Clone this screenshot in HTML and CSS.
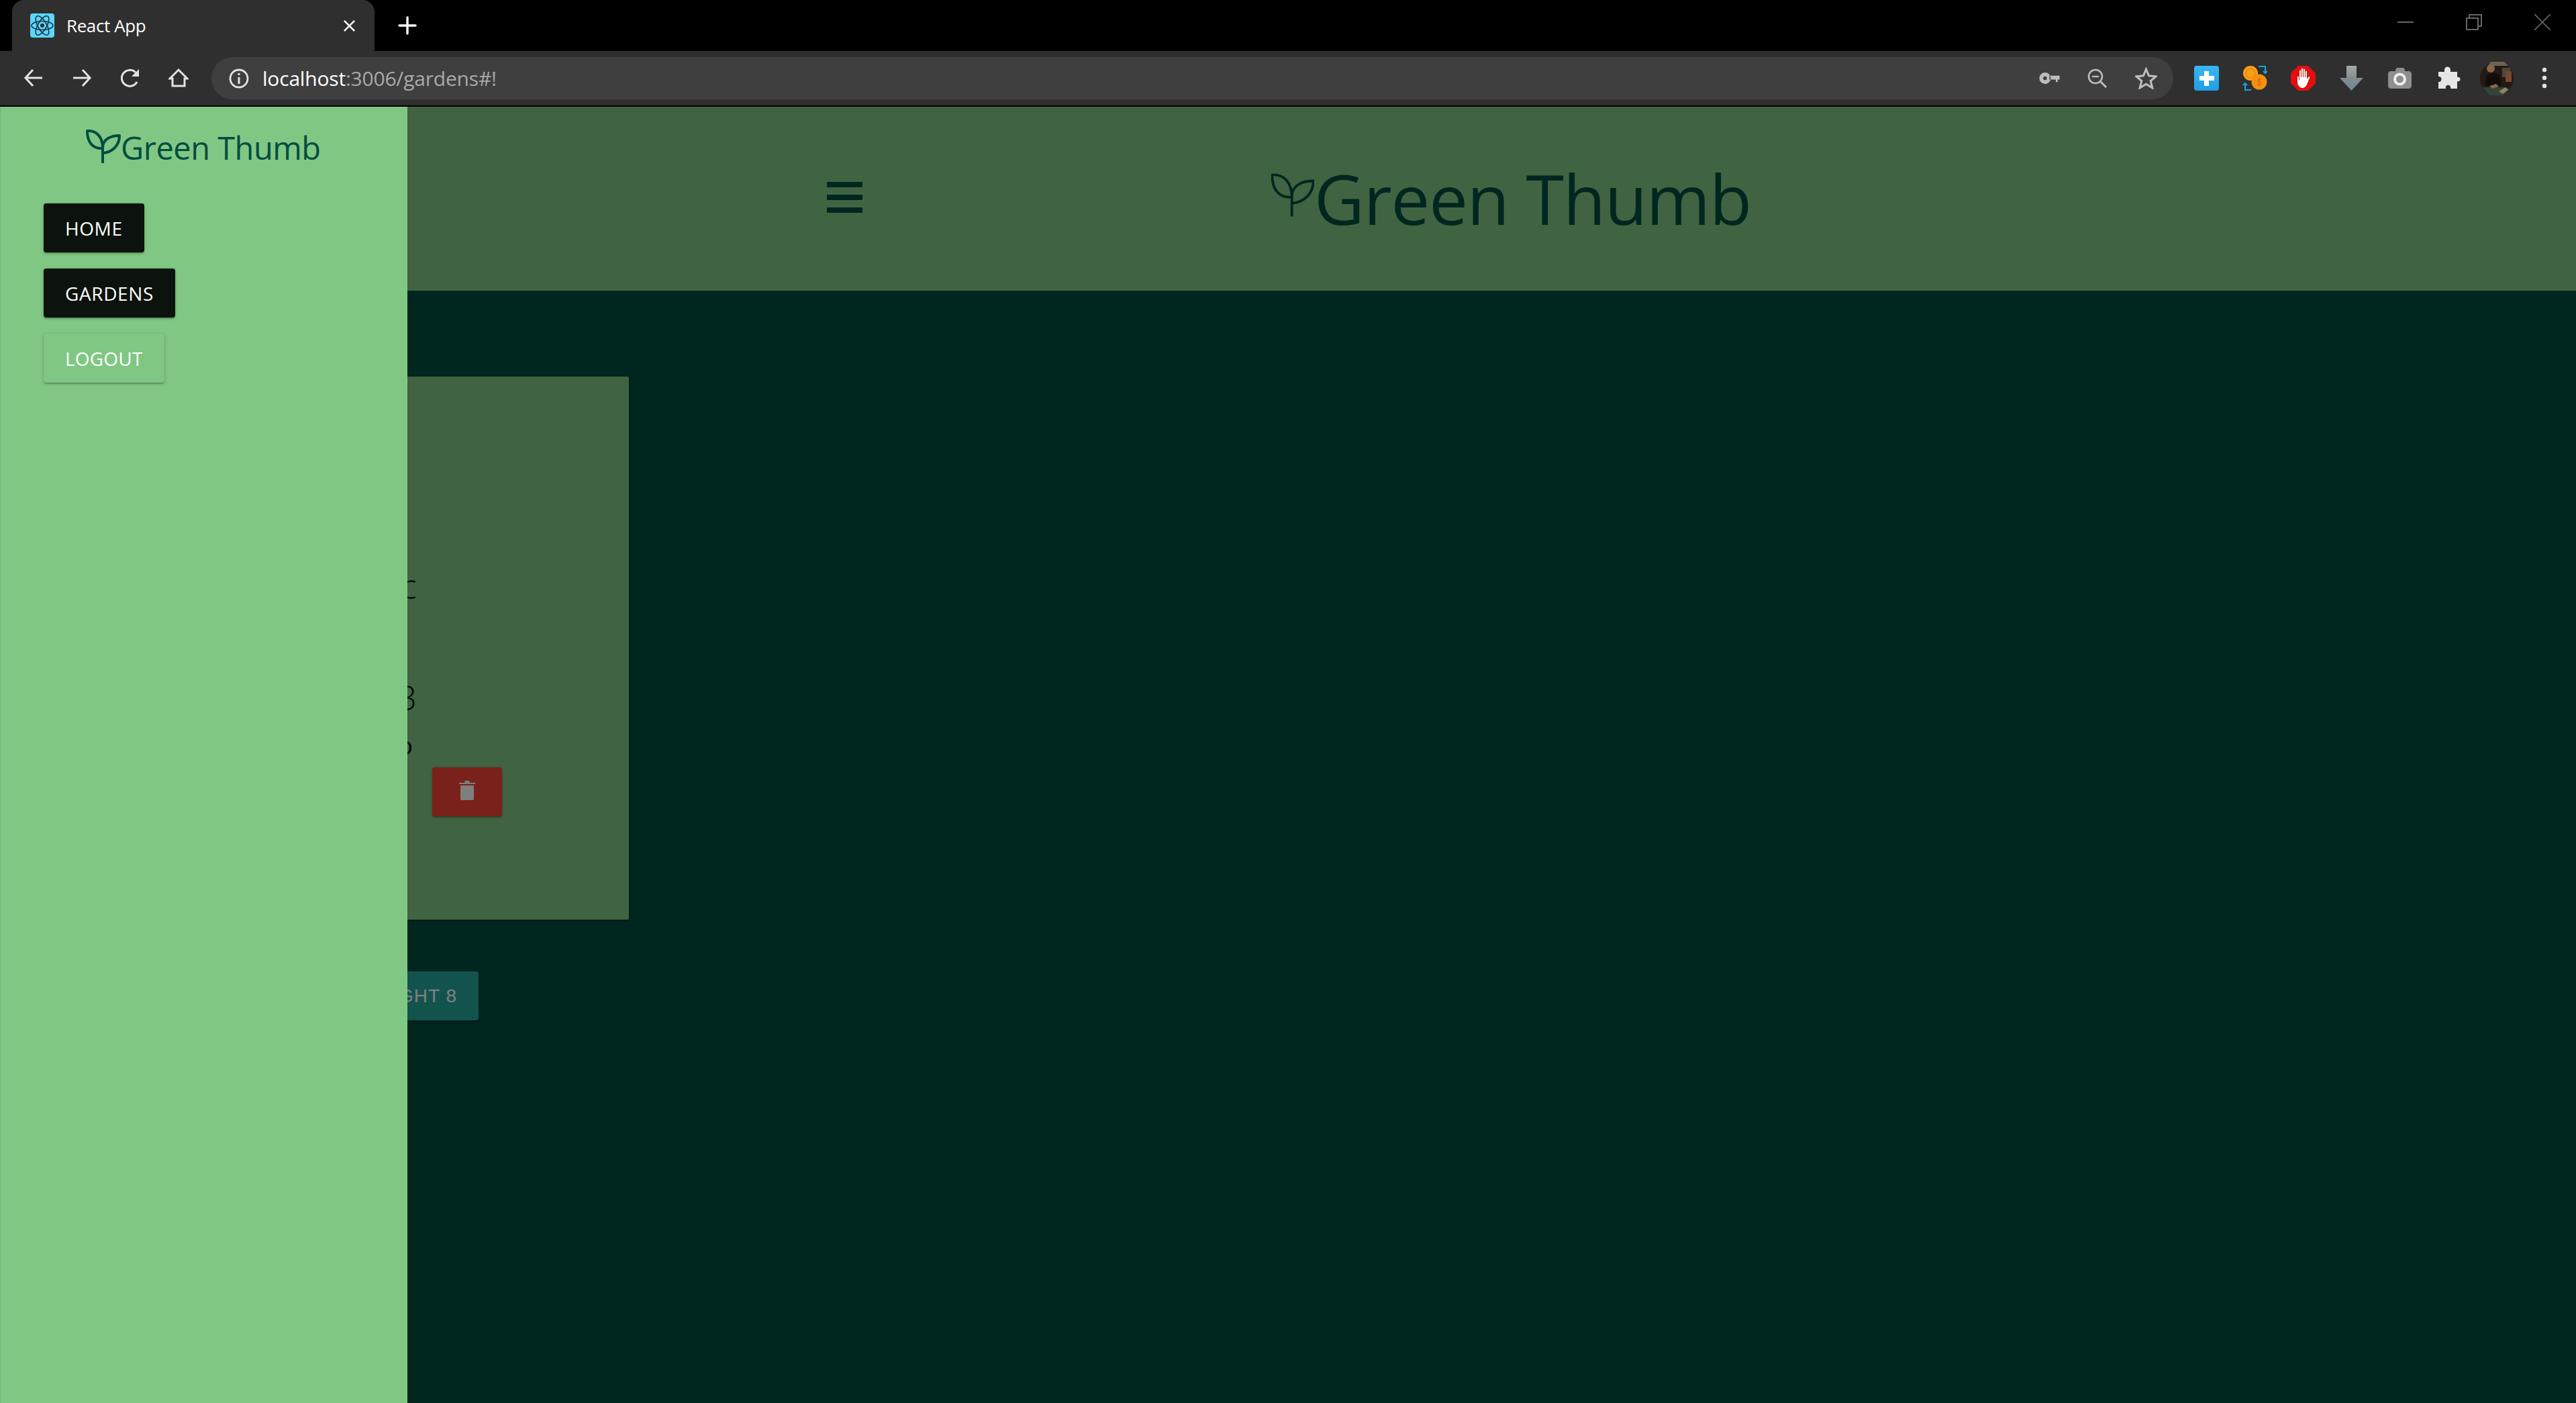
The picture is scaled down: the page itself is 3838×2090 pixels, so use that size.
FILE: index.html
```html
<!DOCTYPE html>
<html lang="en">
<head>
<meta charset="UTF-8">
<meta name="viewport" content="width=device-width, initial-scale=1.0">
<title>React App</title>
<link rel="stylesheet" href="styles.css">
</head>
<body>
<div class="browser">
  <div class="tabstrip">
    <div class="tab">
      <svg class="favicon" viewBox="0 0 36 36">
        <rect width="36" height="36" rx="4" fill="#5cd5fb"/>
        <g fill="none" stroke="#1c3440" stroke-width="1.6">
          <ellipse cx="18" cy="18" rx="16" ry="6.5"/>
          <ellipse cx="18" cy="18" rx="16" ry="6.5" transform="rotate(60 18 18)"/>
          <ellipse cx="18" cy="18" rx="16" ry="6.5" transform="rotate(120 18 18)"/>
        </g>
        <circle cx="18" cy="18" r="3" fill="#1c3440"/>
      </svg>
      <span class="tab-title">React App</span>
      <svg class="tab-close" viewBox="0 0 20 20"><path d="M2 2 18 18M18 2 2 18" stroke="#fff" stroke-width="2.6"/></svg>
    </div>
    <svg class="new-tab" viewBox="0 0 28 28"><path d="M14 2V26M2 14H26" stroke="#fff" stroke-width="3.4" stroke-linecap="round"/></svg>
    <div class="window-btns">
      <svg viewBox="0 0 24 24"><path d="M0 12H24" stroke="#666" stroke-width="2"/></svg>
      <svg viewBox="0 0 24 24"><path d="M1 6H18V23H1ZM5 6V1H23V18H18" fill="none" stroke="#666" stroke-width="2"/></svg>
      <svg viewBox="0 0 24 24"><path d="M0 0 24 24M24 0 0 24" stroke="#666" stroke-width="1.6"/></svg>
    </div>
  </div>
  <div class="toolbar">
    <div class="nav-btns">
      <svg viewBox="0 0 30 30"><path d="M28 15H3M14 3 3 15 14 27" fill="none" stroke="#e3e3e3" stroke-width="3"/></svg>
      <svg viewBox="0 0 30 30"><path d="M2 15H27M16 3 27 15 16 27" fill="none" stroke="#e3e3e3" stroke-width="3"/></svg>
      <svg viewBox="0 0 30 30"><path d="M25 21A12 12 0 1 1 23 7" fill="none" stroke="#e3e3e3" stroke-width="3"/><path d="M28 2V13H17Z" fill="#e3e3e3"/></svg>
      <svg viewBox="0 0 30 30"><path d="M15 3 28 16H24V27H6V16H2Z" fill="none" stroke="#e3e3e3" stroke-width="3"/></svg>
    </div>
    <div class="omnibox">
      <svg class="info" viewBox="0 0 30 30"><circle cx="15" cy="15" r="13" fill="none" stroke="#e3e3e3" stroke-width="2.8"/><path d="M15 13V23M15 7V10" stroke="#e3e3e3" stroke-width="3"/></svg>
      <span class="url">localhost<span class="url-rest">:3006/gardens#!</span></span>
      <div class="omni-icons">
        <svg class="key" viewBox="0 0 32 18"><path d="M9 0A9 9 0 1 1 9 18A9 9 0 0 1 9 0ZM9 6A3 3 0 1 0 9 12A3 3 0 0 0 9 6ZM16 5H32V11H29V15H26V11H16Z" fill="#bdbdbd" fill-rule="evenodd"/></svg>
        <svg class="zoom-out" viewBox="0 0 30 30"><circle cx="12" cy="12" r="10" fill="none" stroke="#bdbdbd" stroke-width="2.6"/><path d="M7 12H17" stroke="#bdbdbd" stroke-width="2.4"/><path d="M19 19 28 28" stroke="#bdbdbd" stroke-width="3"/></svg>
        <svg class="star" viewBox="0 0 32 32"><path d="M16 3 20 12.500 30 13.500 22.500 20 25 30 16 24.500 7 30 9.500 20 2 13.500 12 12.500Z" fill="none" stroke="#bdbdbd" stroke-width="3"/></svg>
      </div>
    </div>
    <div class="extensions">
      <svg viewBox="0 0 37 37"><defs><linearGradient id="plus-fill" x1="0" y1="0" x2="0" y2="1"><stop offset="0" stop-color="#38b6f2"/><stop offset="1" stop-color="#1f9fe6"/></linearGradient></defs><rect width="37" height="37" rx="4" fill="url(#plus-fill)"/><path d="M15 8H22V15H30V22H22V30H15V22H8V15H15Z" fill="#fff"/></svg>
      <svg viewBox="0 0 37 37">
        <circle cx="12" cy="11" r="11" fill="#f7a11a"/>
        <circle cx="12" cy="11" r="7" fill="none" stroke="#e58410" stroke-width="1.400"/>
        <circle cx="25" cy="24" r="11.500" fill="#f58f10"/>
        <path d="M25 18V30M28 20H23.500V24H27V28H22" fill="none" stroke="#d9730a" stroke-width="1.400"/>
        <path d="M24 1H34V10M31 8 34 11 37 8" fill="none" stroke="#12a9d8" stroke-width="2"/>
        <path d="M13 36H4V27M1 29 4 26 7 29" fill="none" stroke="#12a9d8" stroke-width="2"/>
      </svg>
      <svg viewBox="0 0 37 37"><path d="M11 0H26L37 11V26L26 37H11L0 26V11Z" fill="#e30e0e"/><path d="M10 17C10 15 12 15 12 17V21H13V8C13 6 15 6 15 8V17H16V5C16 3 18 3 18 5V17H19V6C19 4 21 4 21 6V17H22V9C22 7 24 7 24 9V20L26 17C28 15 29 17 28 18L24 28C22 33 17 34 14 32C11 30 10 27 10 24Z" fill="#fff"/></svg>
      <svg viewBox="0 0 37 37"><defs><linearGradient id="arrow-fill" x1="0" y1="0" x2="0" y2="1"><stop offset="0" stop-color="#a8a8a8"/><stop offset="0.5" stop-color="#858b8e"/><stop offset="1" stop-color="#668a98"/></linearGradient></defs><path d="M11 0H26V18H36L18.500 37 1 18H11Z" fill="url(#arrow-fill)"/></svg>
      <svg viewBox="0 0 37 37"><path d="M5 8H12C12 4 14 3 16 3H23C25 3 26 5 26 8H32C34 8 36 10 36 12V30C36 32 34 34 32 34H5C3 34 1 32 1 30V12C1 10 3 8 5 8Z" fill="#8e8e8e"/><circle cx="18.500" cy="20" r="7.500" fill="none" stroke="#eee" stroke-width="4"/></svg>
      <svg viewBox="0 0 37 37"><path d="M13 6C13 0 22 0 22 6V9H32V17C38 15 38 25 32 23V34H22C24 27 13 27 15 34H4V24C10 25 10 15 4 16V9H13Z" fill="#e6e6e6"/></svg>
    </div>
    <svg class="avatar" viewBox="0 0 50 50">
      <circle cx="25" cy="25" r="25" fill="#231a14"/>
      <path d="M16 0H36L42 6H12Z" fill="#6f6250"/>
      <rect x="33" y="9" width="12" height="14" fill="#4c4540"/>
      <rect x="38" y="14" width="9" height="16" fill="#7a4a2c"/>
      <path d="M9 22C12 16 28 16 30 22L32 36H8Z" fill="#120d0b"/>
      <circle cx="16" cy="10" r="6" fill="#8a6448"/>
      <path d="M4 38H36L44 40 34 50H14Z" fill="#36423a"/>
      <path d="M14 36 24 33 28 37 18 40Z" fill="#8a6448"/>
      <path d="M28 44 38 38 42 42 34 48Z" fill="#8f8468"/>
    </svg>
    <svg class="menu-dots" viewBox="0 0 8 32"><circle cx="4" cy="4" r="3.200" fill="#e3e3e3"/><circle cx="4" cy="16" r="3.200" fill="#e3e3e3"/><circle cx="4" cy="28" r="3.200" fill="#e3e3e3"/></svg>
  </div>
</div>

<div class="app">
  <header class="app-header">
    <svg class="hamburger" viewBox="0 0 53 46"><path d="M1 0H52A1 1 0 0 1 53 1V7A1 1 0 0 1 52 8H1A1 1 0 0 1 0 7V1A1 1 0 0 1 1 0ZM1 19H52A1 1 0 0 1 53 20V26A1 1 0 0 1 52 27H1A1 1 0 0 1 0 26V20A1 1 0 0 1 1 19ZM1 38H52A1 1 0 0 1 53 39V45A1 1 0 0 1 52 46H1A1 1 0 0 1 0 45V39A1 1 0 0 1 1 38Z" fill="#004d40"/></svg>
    <div class="brand">
      <svg class="leaf leaf-big" viewBox="0 0 50 50"><path d="M24 49V22M1 2C13 1 24 9 24 28C10 29 1 20 1 2ZM24 35C38 34 49 24 49 9C36 9 25 14 24 26" fill="none" stroke="#004d40" stroke-width="3" stroke-linecap="round" stroke-linejoin="round"/></svg>
      <span>Green Thumb</span>
    </div>
  </header>

  <main class="content">
    <div class="card">
      <p class="line line-name">Garden Abc</p>
      <p class="line line-size">Plot 3</p>
      <p class="line line-info">Info</p>
      <div class="card-actions">
        <button class="btn btn-edit">Edit</button>
        <button class="btn btn-delete">
          <svg viewBox="0 0 24 30"><path d="M0 4H8L9 1H15L16 4H24V6H0ZM2 8H22V28A2 2 0 0 1 20 30H4A2 2 0 0 1 2 28Z" fill="#fff"/></svg>
        </button>
      </div>
    </div>
    <button class="btn btn-height">HEIGHT 8</button>
  </main>

  <div class="overlay"></div>

  <aside class="sidenav">
    <div class="brand brand-small">
      <svg class="leaf leaf-small" viewBox="0 0 50 50"><path d="M24 49V22M1 2C13 1 24 9 24 28C10 29 1 20 1 2ZM24 35C38 34 49 24 49 9C36 9 25 14 24 26" fill="none" stroke="#004d40" stroke-width="4" stroke-linecap="round" stroke-linejoin="round"/></svg>
      <span>Green Thumb</span>
    </div>
    <nav class="side-links">
      <a class="side-btn side-btn-dark" href="#!">HOME</a>
      <a class="side-btn side-btn-dark" href="#!">GARDENS</a>
      <a class="side-btn side-btn-logout" href="#!">LOGOUT</a>
    </nav>
  </aside>
</div>
</body>
</html>
```

FILE: styles.css
```css
* {
  box-sizing: border-box;
}
html, body {
  height: 100%;
}
body {
  margin: 0;
  display: flex;
  flex-direction: column;
  font-family: "Open Sans", sans-serif;
  background: #004d40;
  overflow: hidden;
}

/* browser chrome */
.browser {
  flex: none;
  height: 159px;
  background: #000;
}
.tabstrip {
  height: 76px;
  display: flex;
  align-items: center;
  padding-left: 18px;
}
.tab {
  width: 540px;
  height: 76px;
  padding: 0 28px 0 27px;
  display: flex;
  align-items: center;
  background: #2f2f2f;
  border-radius: 18px 18px 0 0;
  color: #fff;
  font-size: 26px;
}
.favicon {
  width: 36px;
  height: 36px;
}
.tab-title {
  margin-left: 18px;
  flex: 1;
  letter-spacing: -0.4px;
}
.tab-close {
  width: 19px;
  height: 19px;
}
.new-tab {
  width: 28px;
  height: 28px;
  margin-left: 35px;
}
.window-btns {
  margin-left: auto;
  margin-right: 38px;
  margin-bottom: 11px;
  display: flex;
  gap: 78px;
}
.window-btns svg {
  width: 24px;
  height: 24px;
}
.toolbar {
  height: 81px;
  padding: 9px 0 0 35px;
  display: flex;
  align-items: flex-start;
  background: #2f2f2f;
}
.nav-btns {
  display: flex;
  gap: 42px;
  margin-top: 16px;
}
.nav-btns svg {
  width: 30px;
  height: 30px;
}
.omnibox {
  flex: none;
  width: 2923px;
  height: 63px;
  margin-left: 34px;
  padding: 0 24px 0 26px;
  display: flex;
  align-items: center;
  background: #3f3f3f;
  border-radius: 32px;
}
.info {
  width: 30px;
  height: 30px;
}
.url {
  margin-left: 20px;
  color: #fff;
  font-size: 30px;
  letter-spacing: -0.2px;
}
.url-rest {
  color: #a9a9a9;
}
.omni-icons {
  margin-left: auto;
  display: flex;
  align-items: center;
  gap: 41px;
}
.key {
  width: 31px;
  height: 17px;
}
.zoom-out {
  width: 30px;
  height: 30px;
}
.star {
  width: 33px;
  height: 33px;
}
.extensions {
  display: flex;
  gap: 35px;
  margin: 13px 0 0 31px;
}
.extensions svg {
  width: 37px;
  height: 37px;
}
.avatar {
  width: 50px;
  height: 50px;
  margin: 7px 0 0 29px;
}
.menu-dots {
  width: 8px;
  height: 32px;
  margin: 15px 0 0 42px;
}

/* app */
.app {
  flex: 1;
  position: relative;
  overflow: hidden;
}
.app-header {
  height: 274px;
  padding: 112px 0 0 1232px;
  display: flex;
  align-items: flex-start;
  background: #81c784;
  color: #004d40;
}
.hamburger {
  width: 53px;
  height: 46px;
}
.brand {
  display: flex;
  align-items: flex-start;
  font-size: 103px;
  letter-spacing: -1.2px;
  line-height: 1;
}
.app-header .brand {
  margin: -27px 0 0 609px;
}
.leaf-big {
  width: 64px;
  height: 66px;
  margin-top: 13px;
}
.content {
  padding: 128px 0 0 300px;
}
.card {
  width: 637px;
  height: 809px;
  padding-top: 278px;
  background: #81c784;
  border-radius: 3px;
  box-shadow: 0 2px 2px rgba(0, 0, 0, 0.14), 0 3px 1px -2px rgba(0, 0, 0, 0.12), 0 1px 5px rgba(0, 0, 0, 0.2);
}
.line {
  margin: 0;
  color: #000;
  font-weight: 300;
  white-space: nowrap;
}
.line-name {
  font-size: 50px;
  line-height: 68px;
  padding-left: 55px;
}
.line-size {
  font-size: 50px;
  line-height: 68px;
  margin-top: 98px;
  padding-left: 193px;
}
.line-info {
  font-size: 36px;
  font-weight: 400;
  line-height: 50px;
  margin-top: 13px;
  padding-left: 249px;
}
.card-actions {
  display: flex;
  gap: 64px;
  margin-top: 7px;
  padding-left: 200px;
}
.btn {
  height: 73px;
  border: 0;
  border-radius: 4px;
  color: #fff;
  font-family: "Liberation Sans", sans-serif;
  font-size: 28px;
  letter-spacing: 1px;
  box-shadow: 0 2px 2px rgba(0, 0, 0, 0.14), 0 3px 1px -2px rgba(0, 0, 0, 0.12), 0 1px 5px rgba(0, 0, 0, 0.2);
}
.btn-edit {
  width: 80px;
  background: #26a69a;
}
.btn-delete {
  width: 104px;
  background: #f44336;
  display: flex;
  align-items: center;
  justify-content: center;
  padding: 0 0 6px;
}
.btn-delete svg {
  width: 24px;
  height: 30px;
}
.btn-height {
  display: block;
  width: 290px;
  margin: 77px 0 0 123px;
  padding: 0 32px;
  text-align: right;
  background: #26a69a;
}
.overlay {
  position: absolute;
  inset: 0;
  background: rgba(0, 0, 0, 0.5);
}

/* drawer */
.sidenav {
  position: absolute;
  top: 0;
  left: 0;
  bottom: 0;
  width: 607px;
  padding: 0 0 0 65px;
  background: #81c784;
  box-shadow: inset 1px 0 0 #74b377;
  color: #004d40;
}
.brand-small {
  font-size: 47px;
  letter-spacing: -0.5px;
  height: 144px;
  padding: 38px 0 0 63px;
}
.leaf-small {
  width: 52px;
  height: 50px;
  margin-top: -4px;
}
.side-links {
  display: flex;
  flex-direction: column;
  align-items: flex-start;
  gap: 24px;
}
.side-btn {
  height: 73px;
  padding: 0 32px;
  display: flex;
  align-items: center;
  color: #fff;
  font-size: 28px;
  letter-spacing: 0.6px;
  text-decoration: none;
  border-radius: 4px;
  background: #81c784;
  box-shadow: 0 2px 2px rgba(0, 0, 0, 0.14), 0 3px 1px -2px rgba(0, 0, 0, 0.12), 0 1px 5px rgba(0, 0, 0, 0.2);
}
.side-btn-dark {
  background: #0b130c;
}
.side-btn-logout {
  letter-spacing: 0.2px;
}
```
